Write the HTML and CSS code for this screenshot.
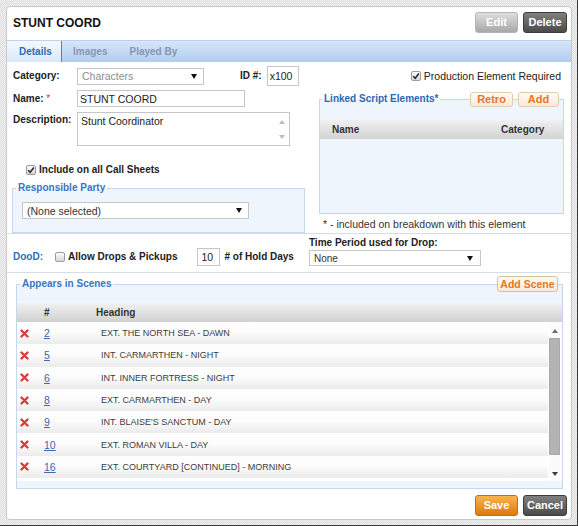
FILE: index.html
```html
<!DOCTYPE html>
<html>
<head>
<meta charset="utf-8">
<link rel="stylesheet" href="styles.css">
</head>
<body>
<div class="screen">
  <div class="dialog">
    <div class="hdr">
      <div class="title">STUNT COORD</div>
      <div class="btns">
        <span class="btn btn-edit">Edit</span>
        <span class="btn btn-dark">Delete</span>
      </div>
    </div>

    <div class="tabs">
      <div class="tab active">Details</div>
      <div class="tab">Images</div>
      <div class="tab">Played By</div>
    </div>

    <div class="details">
      <div class="col">
        <div class="frow r1">
          <span class="lbl lbl-w">Category:</span>
          <div class="select sel-cat"><span class="muted">Characters</span><span class="arrow"></span></div>
          <span class="lbl lbl-id">ID #:</span>
          <div class="input in-id">x100</div>
        </div>
        <div class="frow r2">
          <span class="lbl lbl-w">Name: <span class="req">*</span></span>
          <div class="input in-name">STUNT COORD</div>
        </div>
        <div class="frow r3">
          <span class="lbl lbl-w lbl-top">Description:</span>
          <div class="textarea">
            <div class="ta-text">Stunt Coordinator</div>
            <div class="ta-scroll"><span class="tri-up light"></span><span class="tri-down light"></span></div>
          </div>
        </div>
        <div class="frow r4">
          <span class="cb"><svg width="8" height="8" viewBox="0 0 8 8"><path d="M1.2 4.2 L3.2 6.2 L6.9 1.6" fill="none" stroke="#2b2b2b" stroke-width="1.6"/></svg></span>
          <span class="lbl">Include on all Call Sheets</span>
        </div>
        <fieldset class="fs fs-resp">
          <legend>Responsible Party</legend>
          <div class="resp-body">
            <div class="select sel-resp"><span>(None selected)</span><span class="arrow"></span></div>
          </div>
        </fieldset>
      </div>

      <div class="col">
        <div class="frow prod">
          <span class="cb"><svg width="8" height="8" viewBox="0 0 8 8"><path d="M1.2 4.2 L3.2 6.2 L6.9 1.6" fill="none" stroke="#2b2b2b" stroke-width="1.6"/></svg></span>
          <span>Production Element Required</span>
        </div>
        <div class="wrap lse-wrap">
          <fieldset class="fs fs-lse">
            <legend>Linked Script Elements*</legend>
            <div class="lse-head"><span>Name</span><span>Category</span></div>
            <div class="lse-body"></div>
          </fieldset>
          <div class="lse-actions">
            <span class="obtn obtn-retro">Retro</span>
            <span class="obtn obtn-add">Add</span>
          </div>
        </div>
        <div class="note">* - included on breakdown with this element</div>
      </div>
    </div>

    <div class="dod">
      <div class="dod-left">
        <span class="lbl blue">DooD:</span>
        <span class="cb cb-drop"></span>
        <span class="lbl">Allow Drops &amp; Pickups</span>
        <div class="input in-hold">10</div>
        <span class="lbl lbl-hold"># of Hold Days</span>
      </div>
      <div class="dod-right">
        <span class="lbl">Time Period used for Drop:</span>
        <div class="select sel-drop"><span>None</span><span class="arrow"></span></div>
      </div>
    </div>

    <div class="wrap sc-wrap">
      <fieldset class="fs fs-sc">
        <legend>Appears in Scenes</legend>
        <div class="sc-head"><span></span><span>#</span><span>Heading</span></div>
        <div class="sc-body">
          <div class="sc-rows">
            <div class="sc-row"><svg class="x" width="9" height="9" viewBox="0 0 9 9"><path d="M1.5 1.5 L7.5 7.5 M7.5 1.5 L1.5 7.5" stroke="#d8393b" stroke-width="2.3" stroke-linecap="round"/></svg><a class="num">2</a><span class="hd">EXT. THE NORTH SEA - DAWN</span></div>
            <div class="sc-row"><svg class="x" width="9" height="9" viewBox="0 0 9 9"><path d="M1.5 1.5 L7.5 7.5 M7.5 1.5 L1.5 7.5" stroke="#d8393b" stroke-width="2.3" stroke-linecap="round"/></svg><a class="num">5</a><span class="hd">INT. CARMARTHEN - NIGHT</span></div>
            <div class="sc-row"><svg class="x" width="9" height="9" viewBox="0 0 9 9"><path d="M1.5 1.5 L7.5 7.5 M7.5 1.5 L1.5 7.5" stroke="#d8393b" stroke-width="2.3" stroke-linecap="round"/></svg><a class="num">6</a><span class="hd">INT. INNER FORTRESS - NIGHT</span></div>
            <div class="sc-row"><svg class="x" width="9" height="9" viewBox="0 0 9 9"><path d="M1.5 1.5 L7.5 7.5 M7.5 1.5 L1.5 7.5" stroke="#d8393b" stroke-width="2.3" stroke-linecap="round"/></svg><a class="num">8</a><span class="hd">EXT. CARMARTHEN - DAY</span></div>
            <div class="sc-row"><svg class="x" width="9" height="9" viewBox="0 0 9 9"><path d="M1.5 1.5 L7.5 7.5 M7.5 1.5 L1.5 7.5" stroke="#d8393b" stroke-width="2.3" stroke-linecap="round"/></svg><a class="num">9</a><span class="hd">INT. BLAISE'S SANCTUM - DAY</span></div>
            <div class="sc-row"><svg class="x" width="9" height="9" viewBox="0 0 9 9"><path d="M1.5 1.5 L7.5 7.5 M7.5 1.5 L1.5 7.5" stroke="#d8393b" stroke-width="2.3" stroke-linecap="round"/></svg><a class="num">10</a><span class="hd">EXT. ROMAN VILLA - DAY</span></div>
            <div class="sc-row"><svg class="x" width="9" height="9" viewBox="0 0 9 9"><path d="M1.5 1.5 L7.5 7.5 M7.5 1.5 L1.5 7.5" stroke="#d8393b" stroke-width="2.3" stroke-linecap="round"/></svg><a class="num">16</a><span class="hd">EXT. COURTYARD [CONTINUED] - MORNING</span></div>
          </div>
          <div class="vscroll">
            <div class="sb-up"><span class="tri-up"></span></div>
            <div class="sb-thumb"></div>
            <div class="sb-track"></div>
            <div class="sb-down"><span class="tri-down"></span></div>
          </div>
        </div>
      </fieldset>
      <span class="obtn obtn-scene">Add Scene</span>
    </div>

    <div class="footer">
      <span class="btn btn-save">Save</span>
      <span class="btn btn-dark">Cancel</span>
    </div>
  </div>
</div>
</body>
</html>
```

FILE: styles.css
```css
* { box-sizing: border-box; }
html, body { margin: 0; padding: 0; }
body {
  font-family: "Liberation Sans", Arial, sans-serif;
  font-size: 10.5px;
  color: #222;
}

.screen {
  width: 578px;
  height: 526px;
  padding: 6px 5px 5px 6px;
  border-right: 1px solid #3a3a3a;
  border-bottom: 1px solid #3a3a3a;
  background: repeating-conic-gradient(#dcdcdc 0 25%, #f2f2f2 0 50%) 0 0 / 2px 2px;
}

.dialog {
  width: 566px;
  height: 514px;
  background: #fff;
  border: 1px solid #c9c9c9;
  border-radius: 4px;
  display: flex;
  flex-direction: column;
  overflow: hidden;
}

/* header */
.hdr {
  height: 33px;
  flex: none;
  display: flex;
  align-items: center;
  justify-content: space-between;
  padding: 0 4px 2px 6px;
}
.title { font-size: 12px; font-weight: bold; color: #111; }
.btns { display: flex; gap: 5px; }
.btn {
  height: 21px;
  line-height: 19px;
  border-radius: 3px;
  font-size: 11px;
  font-weight: bold;
  color: #fff;
  text-align: center;
  border: 1px solid;
}
.btn-edit { width: 43px; background: linear-gradient(#dedede, #a8a8a8); border-color: #b4b4b4; }
.btn-dark { width: 44px; background: linear-gradient(#808080, #4a4a4a); border-color: #3c3c3c; }
.btn-save { width: 43px; background: linear-gradient(#f8b44e, #dd7a0c); border-color: #c66c10; }

/* tabs */
.tabs {
  height: 22px;
  flex: none;
  display: flex;
  background: linear-gradient(#d6e6f9, #b2ccef);
  border-top: 1px solid #bdd2ee;
}
.tab {
  padding: 0 11px;
  line-height: 21px;
  font-size: 10px;
  font-weight: bold;
  color: #8497b1;
}
.tab.active {
  width: 55px;
  padding: 0 10px 0 12px;
  color: #2e6cb4;
  background: linear-gradient(#f5f9fe, #d9e8f9);
  border-right: 1px solid #4f80c2;
}

/* details */
.details {
  height: 172px;
  flex: none;
  display: grid;
  grid-template-columns: 293px 245px;
  column-gap: 14px;
  padding: 4px 7px 0 5px;
  border-bottom: 1px solid #d6dde6;
  align-items: start;
}
.col { display: flex; flex-direction: column; }
.frow { display: flex; align-items: center; }
.lbl { font-size: 10px; font-weight: bold; color: #222; line-height: 12px; }
.lbl-w { width: 65px; padding-left: 1px; flex: none; }
.lbl-top { align-self: flex-start; padding-top: 2px; }
.req { color: #d33; font-weight: normal; }
.blue { color: #2f6fb8; }

.input {
  border: 1px solid #c6c6c6;
  background: #fff;
  color: #222;
  display: flex;
  align-items: center;
}
.select {
  border: 1px solid #c6c6c6;
  background: #fff;
  color: #333;
  display: flex;
  align-items: center;
  justify-content: space-between;
  padding: 0 6px 0 4px;
}
.muted { color: #8e8e8e; }
.arrow {
  width: 0;
  height: 0;
  border-left: 3px solid transparent;
  border-right: 3px solid transparent;
  border-top: 5px solid #111;
}

.r1 { height: 20px; }
.sel-cat { width: 127px; height: 17px; }
.lbl-id { margin-left: 36px; }
.in-id { width: 32px; height: 20px; margin-left: 5px; padding-left: 2px; }

.r2 { margin-top: 4px; }
.in-name { width: 168px; height: 17px; padding-left: 2px; }

.r3 { margin-top: 5px; }
.textarea {
  width: 213px;
  height: 34px;
  border: 1px solid #c6c6c6;
  display: flex;
}
.ta-text { flex: 1; padding: 1px 3px; line-height: 14px; }
.ta-scroll {
  width: 14px;
  display: flex;
  flex-direction: column;
  justify-content: space-between;
  align-items: center;
  padding: 7px 0 6px;
}
.tri-up, .tri-down {
  width: 0;
  height: 0;
  border-left: 3px solid transparent;
  border-right: 3px solid transparent;
}
.tri-up { border-bottom: 4px solid #6b6b6b; }
.tri-down { border-top: 4px solid #3a3a3a; }
.tri-up.light { border-bottom-color: #bdbdbd; }
.tri-down.light { border-top-color: #bdbdbd; }

.r4 { margin-top: 18px; height: 12px; padding-left: 14px; gap: 3px; }
.cb {
  width: 10px;
  height: 10px;
  border: 1px solid #9c9c9c;
  border-radius: 2px;
  background: linear-gradient(#fbfbfb, #d8d8d8);
  display: inline-flex;
  align-items: center;
  justify-content: center;
  flex: none;
}

/* fieldsets */
.wrap { position: relative; }
.fs {
  margin: 0;
  padding: 0;
  min-width: 0;
  border: 1px solid #c5d7ee;
  background: #eef5fd;
}
.fs legend {
  padding: 0 2px;
  margin-left: 3px;
  font-size: 10px;
  font-weight: bold;
  line-height: 12px;
  color: #3a76c1;
}
.fs-resp { margin-top: 6px; }
.resp-body { padding: 8px 0 13px 9px; }
.sel-resp { width: 227px; height: 17px; }

.prod { height: 20px; justify-content: flex-end; gap: 3px; padding-right: 3px; }

.lse-wrap { margin-top: 7px; }
.fs-lse legend { margin-left: 2px; color: #2f68b2; }
.lse-head {
  margin-top: 15px;
  height: 19px;
  display: grid;
  grid-template-columns: 169px 1fr;
  align-items: center;
  padding-left: 12px;
  font-size: 10px;
  font-weight: bold;
  color: #333;
  background: linear-gradient(#f1f1f1, #d2d2d2);
}
.lse-body { height: 74px; }
.lse-actions {
  position: absolute;
  top: -1px;
  right: 5px;
  display: flex;
  gap: 5px;
}
.obtn {
  height: 15px;
  line-height: 13px;
  border: 1px solid #e2cdb2;
  border-radius: 3px;
  background: linear-gradient(#fffaf3, #fbe9d4);
  color: #e57726;
  font-size: 11px;
  font-weight: bold;
  text-align: center;
}
.obtn-retro { width: 43px; }
.obtn-add { width: 41px; }
.note { margin-top: 4px; padding-left: 4px; line-height: 12px; color: #333; }

/* DoD row */
.dod {
  height: 39px;
  flex: none;
  display: flex;
  align-items: flex-end;
  padding: 0 0 6px 6px;
  border-bottom: 1px solid #d6dde6;
}
.dod-left { display: flex; align-items: center; height: 18px; }
.cb-drop { margin-left: 12px; margin-right: 3px; }
.in-hold { width: 23px; height: 18px; margin-left: 20px; padding-left: 3px; }
.lbl-hold { margin-left: 4px; }
.dod-right { display: flex; flex-direction: column; gap: 1px; margin-left: 15px; }
.sel-drop { width: 172px; height: 16px; padding-left: 4px; padding-right: 7px; font-size: 10px; }

/* scenes */
.sc-wrap { margin: 5px 8px 0 9px; flex: none; }
.sc-head {
  margin-top: 13px;
  height: 19px;
  display: grid;
  grid-template-columns: 27px 52px 1fr;
  align-items: center;
  font-size: 10px;
  font-weight: bold;
  color: #333;
  background: linear-gradient(#f1f1f1, #d1d1d1);
}
.sc-body {
  display: flex;
  height: 159px;
  margin-bottom: 7px;
  background: #fff;
}
.sc-rows { flex: 1; overflow: hidden; }
.sc-row {
  display: grid;
  grid-template-columns: 27px 57px 1fr;
  align-items: center;
  height: 22.3px;
  background: linear-gradient(#ffffff 0%, #fcfcfc 45%, #ebebeb 100%);
}
.x { margin-left: 3px; }
.num { color: #3d67ae; text-decoration: underline; font-size: 10.5px; }
.hd { font-size: 9px; color: #3c3c3c; }
.vscroll {
  width: 11px;
  margin: 0 2px 0 1px;
  display: flex;
  flex-direction: column;
  background: #fbfbfb;
}
.sb-up { height: 16px; display: flex; justify-content: center; padding-top: 7px; }
.sb-thumb { height: 117px; background: #b3b3b3; border: 1px solid #a9a9a9; }
.sb-track { flex: 1; }
.sb-down { height: 12px; display: flex; justify-content: center; padding-top: 3px; }
.obtn-scene {
  position: absolute;
  top: -2px;
  right: 5px;
  width: 61px;
  height: 16px;
  line-height: 14px;
  font-size: 10.5px;
  border-color: #d8c2a4;
}

/* footer */
.footer {
  height: 30px;
  flex: none;
  display: flex;
  justify-content: flex-end;
  gap: 5px;
  padding: 6px 4px 0;
}
```
